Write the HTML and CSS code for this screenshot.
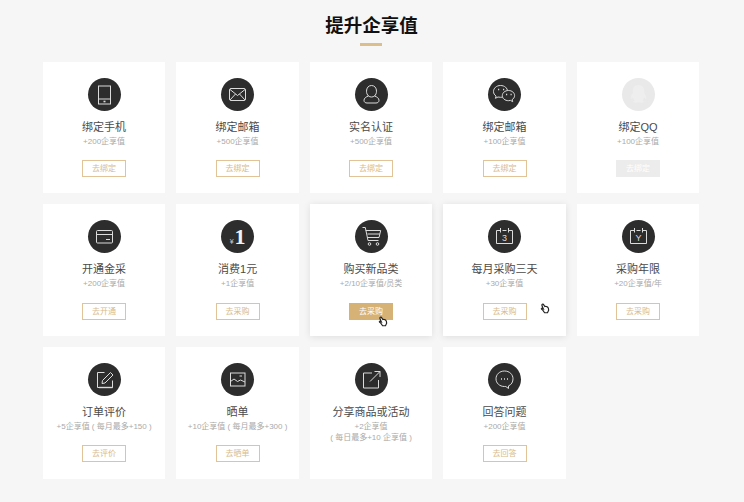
FILE: index.html
```html
<!DOCTYPE html>
<html lang="zh-CN">
<head>
  <meta charset="UTF-8"/>
  <title>提升企享值</title>
  <link rel="stylesheet" href="styles.css">
</head>
<body>
  <main class="page">
    <h1 class="title">提升企享值</h1>
    <div class="title-line"></div>

    <div class="task-grid">

      <div class="task">
        <div class="icon">
          <svg viewBox="0 0 33 33"><rect x="10.5" y="8" width="12" height="18"/><path d="M10.5 21h12"/><rect class="dot" x="15.5" y="22.7" width="2" height="1.6"/></svg>
        </div>
        <div class="name">绑定手机</div>
        <div class="desc">+200企享值</div>
        <a class="btn">去绑定</a>
      </div>

      <div class="task">
        <div class="icon">
          <svg viewBox="0 0 33 33"><rect x="8.5" y="10.5" width="16" height="12" rx="1.5"/><path d="M9 11.5l7.5 6 7.5-6M9 22l5.5-6M24 22l-5.5-6"/></svg>
        </div>
        <div class="name">绑定邮箱</div>
        <div class="desc">+500企享值</div>
        <a class="btn">去绑定</a>
      </div>

      <div class="task">
        <div class="icon">
          <svg viewBox="0 0 33 33"><path d="M13.5 18c-1.3-1.200-2-2.900-2-4.800 0-3.400 2-5.700 5-5.700s5 2.300 5 5.700c0 1.900-.7 3.600-2 4.800"/><path d="M13.5 18c-2.500.8-4.500 2.300-4.500 4.300 0 1.800 1.300 2.700 3 2.700h9c1.700 0 3-.9 3-2.700 0-2-2-3.500-4.500-4.300-.8.700-1.800 1-3 1s-2.200-.3-3-1z"/></svg>
        </div>
        <div class="name">实名认证</div>
        <div class="desc">+500企享值</div>
        <a class="btn">去绑定</a>
      </div>

      <div class="task">
        <div class="icon">
          <svg viewBox="0 0 33 33"><path d="M12.5 7.500c-4 0-7 2.700-7 6 0 1.900 1 3.500 2.600 4.600l-.7 2.200 2.600-1.300c.8.200 1.600.3 2.500.3 4 0 7-2.700 7-6s-3-5.800-7-5.800z"/><path class="solid" d="M20.5 12.500c-3.500 0-6.200 2.300-6.200 5.100s2.700 5.100 6.200 5.100c.7 0 1.400-.1 2-.3l2.200 1.300-.6-2c1.500-1 2.500-2.500 2.500-4.100 0-2.800-2.600-5.100-6.100-5.100z"/><path class="dots" d="M10 11.500h1.200M15 11.500h1.200M18 16.500h1.200M22.500 16.500h1.200"/></svg>
        </div>
        <div class="name">绑定邮箱</div>
        <div class="desc">+100企享值</div>
        <a class="btn">去绑定</a>
      </div>

      <div class="task">
        <div class="icon icon-off">
          <svg viewBox="0 0 33 33"><path class="qq" d="M16.5 7c-3.800 0-5.800 2.800-5.800 6v2.200c-1.300 1.700-2.300 3.800-2 5.300.4.700 1.400 0 2.200-1 .3 1.300 1 2.300 1.800 3-1 .4-1.800 1-1.500 1.600.6.800 3.300.6 5.300.1 2 .5 4.700.7 5.300-.1.300-.6-.5-1.200-1.500-1.600.8-.7 1.500-1.700 1.800-3 .8 1 1.800 1.700 2.200 1 .3-1.500-.7-3.600-2-5.300V13c0-3.200-2-6-5.800-6z"/></svg>
        </div>
        <div class="name">绑定QQ</div>
        <div class="desc">+100企享值</div>
        <a class="btn btn-off">去绑定</a>
      </div>

      <div class="task">
        <div class="icon">
          <svg viewBox="0 0 33 33"><rect x="8.5" y="10.5" width="16" height="12.5" rx="1"/><path d="M8.5 14.500h16M18 19.500h4"/></svg>
        </div>
        <div class="name">开通金采</div>
        <div class="desc">+200企享值</div>
        <a class="btn">去开通</a>
      </div>

      <div class="task">
        <div class="icon icon-num"><span class="yen">¥</span><span class="one">1</span></div>
        <div class="name">消费1元</div>
        <div class="desc">+1企享值</div>
        <a class="btn">去采购</a>
      </div>

      <div class="task task-hover">
        <div class="icon">
          <svg viewBox="0 0 33 33"><path d="M7.5 7.500h2.800l2.700 13h10.500"/><path d="M10.700 10.500h15l-1.700 7H12.200M12.500 14h12.300"/><circle cx="14.500" cy="24" r="1.300"/><circle cx="22.500" cy="24" r="1.300"/></svg>
        </div>
        <div class="name">购买新品类</div>
        <div class="desc">+2/10企享值/员类</div>
        <a class="btn btn-on">去采购</a>
        <svg class="cursor cursor-a" viewBox="0 0 12 13"><path d="M2.500 1.500c.6-.6 1.400-.3 1.800.4l1.500 2.300c.8-.4 1.800-.3 2.300.1.900.3 1.600.9 1.900 1.700l.4 2.600-1.400 3H5.500L3.300 8.500 1.800 7.200c-.5-.6.100-1.300.9-1l1.300.7-1.600-3.600c-.2-.8-.3-1.400.1-1.800z"/></svg>
      </div>

      <div class="task task-hover">
        <div class="icon">
          <svg viewBox="0 0 33 33"><path d="M12.500 10.500h-4v13h16v-13h-4M14.500 10.500h4"/><path d="M12.500 8v4.500M20.500 8v4.500"/><text class="glyph" x="16.500" y="20.500">3</text></svg>
        </div>
        <div class="name">每月采购三天</div>
        <div class="desc">+30企享值</div>
        <a class="btn">去采购</a>
        <svg class="cursor cursor-b" viewBox="0 0 12 13"><path d="M2.500 1.500c.6-.6 1.400-.3 1.800.4l1.500 2.300c.8-.4 1.800-.3 2.300.1.900.3 1.600.9 1.900 1.700l.4 2.600-1.400 3H5.500L3.300 8.500 1.800 7.200c-.5-.6.100-1.300.9-1l1.300.7-1.600-3.600c-.2-.8-.3-1.400.1-1.800z"/></svg>
      </div>

      <div class="task">
        <div class="icon">
          <svg viewBox="0 0 33 33"><path d="M12.500 10.500h-4v13h16v-13h-4M14.500 10.500h4"/><path d="M12.500 8v4.500M20.500 8v4.500"/><text class="glyph" x="16.500" y="20.500">Y</text></svg>
        </div>
        <div class="name">采购年限</div>
        <div class="desc">+20企享值/年</div>
        <a class="btn">去采购</a>
      </div>

      <div class="task">
        <div class="icon">
          <svg viewBox="0 0 33 33"><path d="M16.500 9.500H9.500v15h15v-7"/><path d="M14.500 17.500l-.5 3 3-.5 8-8-2.500-2.500z"/><path class="thick" d="M11 24.500h13.500"/></svg>
        </div>
        <div class="name">订单评价</div>
        <div class="desc">+5企享值 ( 每月最多+150 )</div>
        <a class="btn">去评价</a>
      </div>

      <div class="task">
        <div class="icon">
          <svg viewBox="0 0 33 33"><rect x="9.5" y="10" width="14.5" height="13"/><path d="M9.5 18.500l3.500-2.500 3.500 2.500 3-1.500 4.500 2"/><path d="M18.500 13h2.500"/></svg>
        </div>
        <div class="name">晒单</div>
        <div class="desc">+10企享值 ( 每月最多+300 )</div>
        <a class="btn">去晒单</a>
      </div>

      <div class="task">
        <div class="icon">
          <svg viewBox="0 0 33 33"><path d="M17 10H8.500v15h15v-8"/><path d="M15 18.500L25 8.500M19.500 8.500h5.500V14"/></svg>
        </div>
        <div class="name">分享商品或活动</div>
        <div class="desc">+2企享值<br>( 每日最多+10 企享值 )</div>
      </div>

      <div class="task">
        <div class="icon">
          <svg viewBox="0 0 33 33"><path d="M16.500 8c-5 0-8.500 3.500-8.500 7.800 0 4.300 3.500 7.700 8.500 7.700h1.300l2.700 2v-2.600c3-1.200 4.500-4 4.500-7.100C25 11.500 21.500 8 16.500 8z"/><path class="dots" d="M13 16h1M16 16h1M19 16h1"/></svg>
        </div>
        <div class="name">回答问题</div>
        <div class="desc">+200企享值</div>
        <a class="btn">去回答</a>
      </div>

    </div>
  </main>
</body>
</html>
```

FILE: styles.css
```css
* {
  box-sizing: border-box;
  margin: 0;
  padding: 0;
}
body {
  font-family: "Liberation Sans", "Noto Sans CJK SC", sans-serif;
  background: #f6f6f6;
  width: 744px;
  height: 502px;
  overflow: hidden;
}
.page {
  padding: 10px 44px 0 42.8px;
}
.title {
  font-family: "Noto Sans CJK SC", sans-serif;
  font-size: 18.5px;
  line-height: 28px;
  font-weight: 700;
  color: #111;
  text-align: center;
}
.title-line {
  width: 22px;
  height: 3px;
  margin: 5px auto 15.7px;
  background: #dcbd8c;
}
.task-grid {
  display: grid;
  grid-template-columns: repeat(5, 122.6px);
  grid-auto-rows: 131.5px;
  column-gap: 10.9px;
  row-gap: 11.2px;
}
.task {
  position: relative;
  display: flex;
  flex-direction: column;
  align-items: center;
  padding-top: 16px;
  background: #fff;
  text-align: center;
}
.task-hover {
  box-shadow: 0 1px 7px rgba(0,0,0,0.1);
}
.icon {
  display: flex;
  align-items: center;
  justify-content: center;
  flex: none;
  width: 33px;
  height: 33px;
  border-radius: 50%;
  background: #2d2d2d;
}
.icon svg {
  display: block;
  width: 33px;
  height: 33px;
  fill: none;
  stroke: #dcdcdc;
  stroke-width: 1;
}
.icon .solid {
  fill: #2d2d2d;
}
.icon .dot {
  fill: #dcdcdc;
  stroke: none;
}
.icon .dots {
  stroke-width: 1.3;
}
.icon .thick {
  stroke-width: 1.4;
}
.icon .glyph {
  font-family: "Liberation Sans", sans-serif;
  font-size: 9px;
  fill: #dcdcdc;
  stroke: none;
  text-anchor: middle;
}
.icon-off {
  background: #e9e9e9;
}
.icon .qq {
  fill: #eeeeee;
  stroke: none;
}
.icon-num {
  align-items: baseline;
  color: #f2f2f2;
  line-height: 33px;
}
.yen {
  font-size: 7px;
  margin-right: 1px;
  color: #ccc;
}
.one {
  font-family: "Liberation Serif", serif;
  font-size: 22px;
  font-weight: 700;
}
.name {
  margin-top: 9px;
  font-size: 11px;
  line-height: 14px;
  color: #4a4a4a;
  white-space: nowrap;
}
.desc {
  margin-top: 3px;
  font-size: 8px;
  line-height: 10.5px;
  color: #aaa;
  white-space: nowrap;
}
.btn {
  width: 44px;
  height: 17px;
  margin-top: 12.8px;
  border: 1px solid #e0c497;
  font-size: 8px;
  line-height: 15px;
  color: #d8bb8c;
  cursor: pointer;
}
.btn-on {
  background: #d6b277;
  border-color: #d6b277;
  color: #fff;
}
.btn-off {
  background: #ececec;
  border-color: #ececec;
  color: #fff;
}
.cursor {
  position: absolute;
  width: 10px;
  height: 11px;
  fill: #fff;
  stroke: #222;
  stroke-width: 1.4;
}
.cursor-a {
  left: 68px;
  top: 112px;
}
.cursor-b {
  left: 97px;
  top: 99px;
}
```
